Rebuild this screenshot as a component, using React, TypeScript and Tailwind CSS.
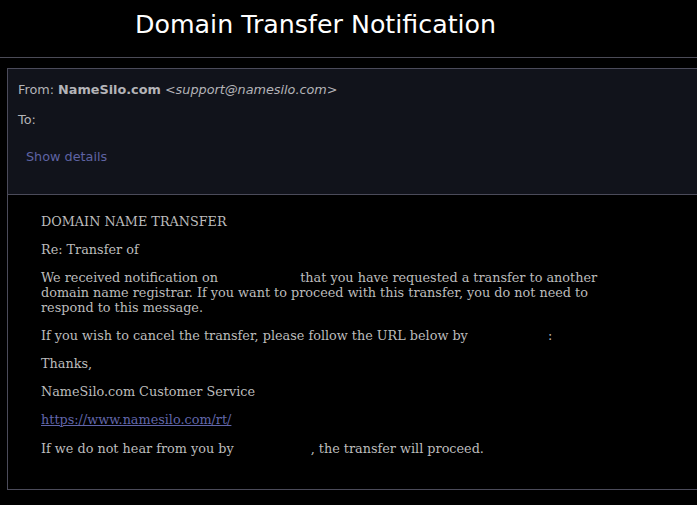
const sans = "font-['DejaVu_Sans',sans-serif]";
const serif = "font-['DejaVu_Serif',serif]";

function Blank({ width }: { width: string }) {
  return <span className={`inline-block ${width}`} />;
}

export default function App() {
  return (
    <div className={`min-h-[505px] w-[697px] overflow-hidden bg-black ${sans}`}>
      <header className="h-[58px] border-b border-[#4b4b57] pl-[135px] pt-[9px]">
        <h1 className="text-[25.3px] leading-[32px] text-white">Domain Transfer Notification</h1>
      </header>

      <div className="ml-[7px] mt-[10px] w-[700px] border border-[#4b4b5a]">
        <div className="h-[126px] border-b border-[#4b4b5a] bg-[#11131b] px-[10px] pt-[12px] text-[12.8px] text-[#b4b4b8]">
          <div className="leading-[17px]">
            From: <b className="font-bold">NameSilo.com</b> <i>&lt;support@namesilo.com&gt;</i>
          </div>
          <div className="mt-[13px] leading-[17px]">To:</div>
          <div className="mt-[20px] pl-[8px] leading-[17px] text-[#5f63a3]">Show details</div>
        </div>

        <div
          className={`h-[294px] max-w-[600px] pl-[33px] pt-[19px] text-[12.8px] leading-[15px] text-[#bcbcbc] ${serif} [&>p]:mb-[13px]`}
        >
          <p>DOMAIN NAME TRANSFER</p>
          <p>Re: Transfer of</p>
          <p>
            We received notification on <Blank width="w-[74px]" /> that you have requested a transfer to another
            domain name registrar. If you want to proceed with this transfer, you do not need to respond to this
            message.
          </p>
          <p>
            If you wish to cancel the transfer, please follow the URL below by <Blank width="w-[76px]" />:
          </p>
          <p>Thanks,</p>
          <p>NameSilo.com Customer Service</p>
          <p className="!mb-[14px]">
            <a href="#" className="text-[#6166aa] underline">
              https://www.namesilo.com/rt/
            </a>
          </p>
          <p>
            If we do not hear from you by <Blank width="w-[73px]" />, the transfer will proceed.
          </p>
        </div>
      </div>
    </div>
  );
}
